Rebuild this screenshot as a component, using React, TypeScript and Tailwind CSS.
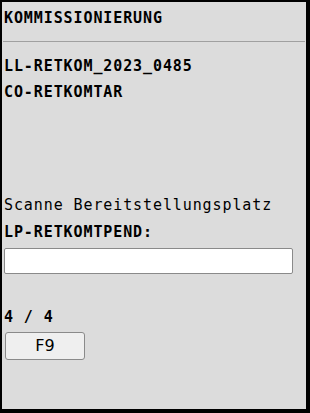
import React from "react";

const mono = "font-['DejaVu_Sans_Mono',monospace] text-[15px] leading-[20px] tracking-[0.9px] text-black";

export default function App() {
  return (
    <div className="w-[310px] h-[413px] box-border bg-[#dcdcdc] border-black border-l-2 border-t-2 border-r-4 border-b-4 flex flex-col">
      <div className={`${mono} font-bold pl-[2px] mt-[6px]`}>KOMMISSIONIERUNG</div>
      <hr className="mt-[13px] mx-[1px] border-0 border-t border-[#a0a0a0]" />
      <div className="flex flex-col pl-[2px] mt-[14px] gap-[6px]">
        <div className={`${mono} font-bold`}>LL-RETKOM_2023_0485</div>
        <div className={`${mono} font-bold`}>CO-RETKOMTAR</div>
      </div>
      <div className="flex flex-col pl-[2px] mt-[93px]">
        <div className={mono}>Scanne Bereitstellungsplatz</div>
        <div className={`${mono} font-bold mt-[7px]`}>LP-RETKOMTPEND:</div>
        <input
          type="text"
          className="mt-[6px] w-[289px] h-[26px] bg-white border border-[#8a8a8a] rounded-[2px] outline-none"
        />
      </div>
      <div className="flex flex-col pl-[2px] mt-[33px]">
        <div className={`${mono} font-bold`}>4 / 4</div>
        <button className="mt-[5px] ml-[1px] w-[80px] h-[28px] bg-[#efefef] border border-[#8a8a8a] rounded-[3px] font-['DejaVu_Sans',sans-serif] text-[16px] text-black">
          F9
        </button>
      </div>
    </div>
  );
}
